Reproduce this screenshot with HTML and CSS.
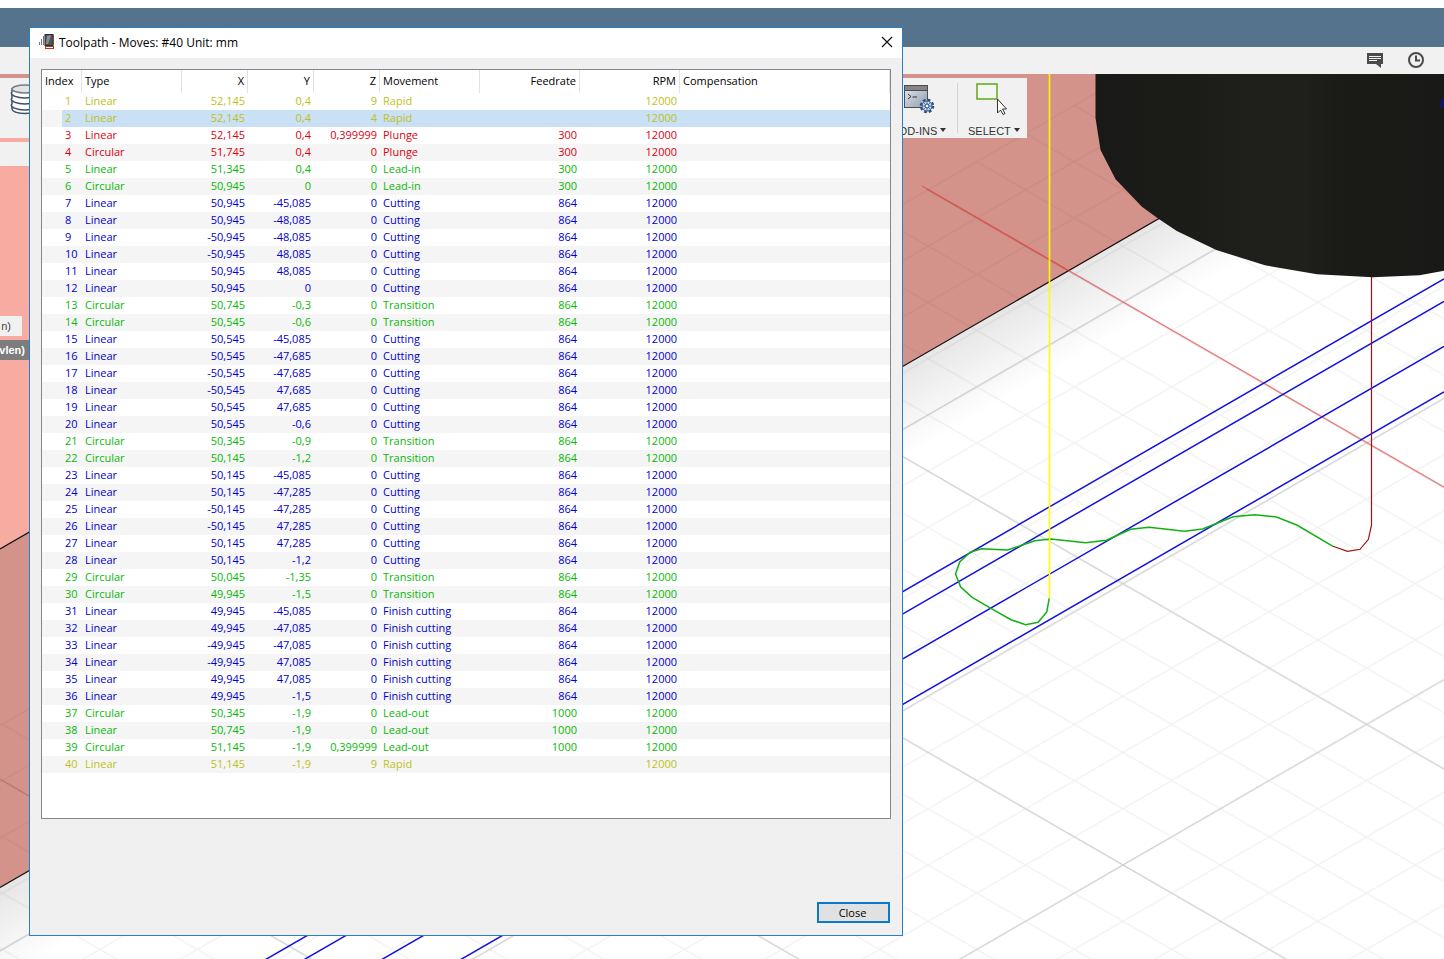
FILE: index.html
```html
<!DOCTYPE html>
<html lang="en">
<head>
<meta charset="utf-8">
<title>Toolpath</title>
<link rel="stylesheet" href="styles.css">
</head>
<body>
<div class="app">
  <svg class="viewport" viewBox="0 0 1444 959" preserveAspectRatio="xMinYMin slice" aria-hidden="true">
    <defs>
      <pattern id="minor" x="1123" y="865" width="97.44" height="56.26" patternUnits="userSpaceOnUse">
        <path d="M0 0L97.44 56.26M0 56.26L97.44 0" stroke="#000" stroke-opacity=".055" stroke-width="1.2"/>
      </pattern>
      <pattern id="major" x="1123" y="865" width="487.2" height="281.3" patternUnits="userSpaceOnUse">
        <path d="M0 0L487.2 281.3M0 281.3L487.2 0" stroke="#000" stroke-opacity=".14" stroke-width="1.2"/>
      </pattern>
      <linearGradient id="shade" gradientUnits="userSpaceOnUse" x1="903" y1="366" x2="943" y2="435">
        <stop offset="0" stop-color="#e6e6e6"/><stop offset="1" stop-color="#fff"/>
      </linearGradient>
      <linearGradient id="tool" x1="0" x2="1" y1="0" y2="0">
        <stop offset="0" stop-color="#191917"/><stop offset=".25" stop-color="#1b1b18"/><stop offset=".45" stop-color="#1f1f1b"/><stop offset=".6" stop-color="#1f1f1b"/><stop offset=".7" stop-color="#1a1a17"/><stop offset="1" stop-color="#191917"/>
      </linearGradient>
    </defs>
    <rect width="1444" height="959" fill="#fff"/>
    <path d="M0 887L1444 55V959H0Z" fill="url(#shade)"/>
    <path d="M0 0H1444V55L0 887Z" fill="#d4938a"/>
    <path d="M0 138H400V320L0 549Z" fill="#f7aba1"/>
    <path d="M0 549L400 318" stroke="#111" stroke-width="1.3"/>
    <path d="M0 887.500L1444 54" stroke="#111" stroke-width="1.2"/>
    <path d="M0 724L1254 0H1444V959H0Z" fill="url(#minor)"/>
    <path d="M0 724L1254 0H1444V959H0Z" fill="url(#major)"/>
    <path d="M922 186L1444 487" stroke="#ff2626" stroke-opacity=".55" stroke-width="1.3"/>
    <g stroke="#1010e0" stroke-width="1.5">
      <path d="M257 964.500L1444 279M296 964.300L1444 301.500M374 964L1444 346.500M453 964L1444 392"/>
    </g>
    <path d="M1049.2 598.3L1046.8 612L1038.1 622.3L1025.6 624.7L1011 619.7L990.9 608.3L972.2 597.3L960.7 587L955.5 574L959.7 562L970.1 552.3L981.5 548.7L1007.6 550L1019.7 546L1034.6 540.7L1050.9 539L1085.6 542.7L1106.5 540.3L1118.6 534.7L1130.7 529.3L1149.1 527.3L1184.5 531.3L1202.6 529L1215.8 523.7L1233.1 516.7L1254.6 514.7L1276.5 517L1297.3 525.3L1333 546.3" fill="none" stroke="#12b012" stroke-width="1.5"/>
    <path d="M1333 546.3L1347.6 551.3L1360.1 549.3L1368.4 539.3L1371.500 525V277" fill="none" stroke="#a01018" stroke-width="1.2"/>
    <path d="M1049.500 74V598" stroke="#ffff00" stroke-width="1.600"/>
    <path d="M1095.500 60V118L1100.500 150L1115.6 179.3L1141.9 206.7L1158.8 219L1176.8 231L1216.3 250L1264.9 265.3L1317 274.3L1372.8 277.3L1419.6 275.3L1444 270.7V60Z" fill="url(#tool)"/>
    <rect x="1441" y="99" width="3" height="9" fill="#10107a"/>
  </svg>

  <header class="titlebar"></header>
  <nav class="tabbar" aria-label="Account">
    <button class="icon-button" aria-label="Comments">
      <svg width="18" height="18" viewBox="0 0 18 18"><path d="M1 2H17V13H15V17L10 13H1Z" fill="#4a4a4a"/><path d="M3 5.500H15M3 7.500H15M3 9.500H11" stroke="#f1f1f1"/></svg>
    </button>
    <button class="icon-button" aria-label="Job status">
      <svg width="18" height="18" viewBox="0 0 18 18" fill="none" stroke="#4a4a4a"><circle cx="9" cy="9" r="7" stroke-width="2"/><path d="M9 4.500V9.500H13" stroke-width="2"/></svg>
    </button>
  </nav>

  <div class="toolbar" role="toolbar">
    <button class="tool first" aria-label="Setup">
      <svg width="30" height="32" viewBox="0 0 30 32" fill="#fdfdfd" stroke="#3c4f66" stroke-width="1.500">
        <path d="M2 23v3c1 6 25 6 26 0v-3z"/><path d="M2 18v3c-3 3 5 6 13 6s15-3 13-6v-3z"/><path d="M2 12v3c-3 3 5 6 13 6s15-3 13-6v-3z"/><path d="M2 6v3c-3 3 5 6 13 6s15-3 13-6V6z"/><ellipse cx="15" cy="6" rx="13" ry="4" fill="#e4e4e4" stroke="#777c84"/>
      </svg>
    </button>
    <button class="tool addins">
      <svg width="34" height="32" viewBox="0 0 34 32">
        <defs><linearGradient id="con" x1="0" y1="0" x2="1" y2="1"><stop offset="0" stop-color="#e8eaee"/><stop offset="1" stop-color="#8e9bb0"/></linearGradient></defs>
        <rect x="2.500" y="2.500" width="23" height="22" fill="url(#con)" stroke="#4a4d52"/><path d="M3 3H25V7H3Z" fill="#858585"/><path d="M2.500 7.500H25.500" stroke="#4a4d52"/>
        <path d="M6 11L9 13.500L6 16M10.500 14H15" fill="none" stroke="#333"/>
        <circle cx="25" cy="23" r="5.500" fill="#c3d6ee" stroke="#274a7c" stroke-width="3.500" stroke-dasharray="2.400 1.920"/><circle cx="25" cy="23" r="5" fill="#c3d6ee" stroke="#3c5f92"/><path d="M25 18V28M20 23H30M21.500 19.500L28.500 26.500M28.500 19.500L21.500 26.500" stroke="#3c5f92" stroke-width=".8"/><circle cx="25" cy="23" r="2" fill="#fff" stroke="#274a7c"/>
      </svg>
      <span>ADD-INS <i class="caret"></i></span>
    </button>
    <button class="tool select">
      <svg width="34" height="32" viewBox="0 0 34 32">
        <rect x="3" y="1" width="20" height="15" fill="#f4f6f1" stroke="#5fa81e" stroke-width="1.500"/>
        <path d="M23.500 16V30L26.500 27L29 31.500L31 30.500L28.500 26H32.500Z" fill="#fdfdfd" stroke="#333"/>
      </svg>
      <span>SELECT <i class="caret"></i></span>
    </button>
  </div>

  <aside class="browser">
    <div class="browser-head"></div>
    <div class="browser-item">n)</div>
    <div class="browser-item active">vlen)</div>
  </aside>

  <section class="dialog" role="dialog" aria-labelledby="dialog-title">
    <div class="dialog-title">
      <svg width="16" height="16" viewBox="0 0 16 16"><path d="M.5 11V8M2.500 11V5M4.500 11V2" stroke="#777"/><rect x="6" y=".5" width="8" height="11" fill="#50545b" stroke="#2c2c2c"/><path d="M8 2L12 1L9 10H7Z" fill="#8b9098"/><path d="M14.500 1V11" stroke="#7a5040"/><rect x="6.500" y="12.500" width="8" height="2" fill="#fff" stroke="#b5391d"/></svg>
      <h1 id="dialog-title">Toolpath - Moves: #40 Unit: mm</h1>
      <button class="x-button" aria-label="Close window"><svg width="12" height="12" viewBox="0 0 12 12"><path d="M1 1L11 11M11 1L1 11" stroke="#111" stroke-width="1.200"/></svg></button>
    </div>
    <div class="dialog-body">
      <div class="list">
        <table>
          <colgroup><col class="c-index"><col class="c-wide"><col class="c-num"><col class="c-num"><col class="c-num"><col class="c-wide"><col class="c-wide"><col class="c-wide"><col></colgroup>
          <thead><tr><th>Index</th><th>Type</th><th>X</th><th>Y</th><th>Z</th><th>Movement</th><th>Feedrate</th><th>RPM</th><th>Compensation</th></tr></thead>
          <tbody>
<tr class="rapid"><td>1</td><td>Linear</td><td>52,145</td><td>0,4</td><td>9</td><td>Rapid</td><td></td><td>12000</td><td></td></tr>
<tr class="rapid selected"><td>2</td><td>Linear</td><td>52,145</td><td>0,4</td><td>4</td><td>Rapid</td><td></td><td>12000</td><td></td></tr>
<tr class="plunge"><td>3</td><td>Linear</td><td>52,145</td><td>0,4</td><td>0,399999</td><td>Plunge</td><td>300</td><td>12000</td><td></td></tr>
<tr class="plunge"><td>4</td><td>Circular</td><td>51,745</td><td>0,4</td><td>0</td><td>Plunge</td><td>300</td><td>12000</td><td></td></tr>
<tr class="lead"><td>5</td><td>Linear</td><td>51,345</td><td>0,4</td><td>0</td><td>Lead-in</td><td>300</td><td>12000</td><td></td></tr>
<tr class="lead"><td>6</td><td>Circular</td><td>50,945</td><td>0</td><td>0</td><td>Lead-in</td><td>300</td><td>12000</td><td></td></tr>
<tr class="cut"><td>7</td><td>Linear</td><td>50,945</td><td>-45,085</td><td>0</td><td>Cutting</td><td>864</td><td>12000</td><td></td></tr>
<tr class="cut"><td>8</td><td>Linear</td><td>50,945</td><td>-48,085</td><td>0</td><td>Cutting</td><td>864</td><td>12000</td><td></td></tr>
<tr class="cut"><td>9</td><td>Linear</td><td>-50,945</td><td>-48,085</td><td>0</td><td>Cutting</td><td>864</td><td>12000</td><td></td></tr>
<tr class="cut"><td>10</td><td>Linear</td><td>-50,945</td><td>48,085</td><td>0</td><td>Cutting</td><td>864</td><td>12000</td><td></td></tr>
<tr class="cut"><td>11</td><td>Linear</td><td>50,945</td><td>48,085</td><td>0</td><td>Cutting</td><td>864</td><td>12000</td><td></td></tr>
<tr class="cut"><td>12</td><td>Linear</td><td>50,945</td><td>0</td><td>0</td><td>Cutting</td><td>864</td><td>12000</td><td></td></tr>
<tr class="lead"><td>13</td><td>Circular</td><td>50,745</td><td>-0,3</td><td>0</td><td>Transition</td><td>864</td><td>12000</td><td></td></tr>
<tr class="lead"><td>14</td><td>Circular</td><td>50,545</td><td>-0,6</td><td>0</td><td>Transition</td><td>864</td><td>12000</td><td></td></tr>
<tr class="cut"><td>15</td><td>Linear</td><td>50,545</td><td>-45,085</td><td>0</td><td>Cutting</td><td>864</td><td>12000</td><td></td></tr>
<tr class="cut"><td>16</td><td>Linear</td><td>50,545</td><td>-47,685</td><td>0</td><td>Cutting</td><td>864</td><td>12000</td><td></td></tr>
<tr class="cut"><td>17</td><td>Linear</td><td>-50,545</td><td>-47,685</td><td>0</td><td>Cutting</td><td>864</td><td>12000</td><td></td></tr>
<tr class="cut"><td>18</td><td>Linear</td><td>-50,545</td><td>47,685</td><td>0</td><td>Cutting</td><td>864</td><td>12000</td><td></td></tr>
<tr class="cut"><td>19</td><td>Linear</td><td>50,545</td><td>47,685</td><td>0</td><td>Cutting</td><td>864</td><td>12000</td><td></td></tr>
<tr class="cut"><td>20</td><td>Linear</td><td>50,545</td><td>-0,6</td><td>0</td><td>Cutting</td><td>864</td><td>12000</td><td></td></tr>
<tr class="lead"><td>21</td><td>Circular</td><td>50,345</td><td>-0,9</td><td>0</td><td>Transition</td><td>864</td><td>12000</td><td></td></tr>
<tr class="lead"><td>22</td><td>Circular</td><td>50,145</td><td>-1,2</td><td>0</td><td>Transition</td><td>864</td><td>12000</td><td></td></tr>
<tr class="cut"><td>23</td><td>Linear</td><td>50,145</td><td>-45,085</td><td>0</td><td>Cutting</td><td>864</td><td>12000</td><td></td></tr>
<tr class="cut"><td>24</td><td>Linear</td><td>50,145</td><td>-47,285</td><td>0</td><td>Cutting</td><td>864</td><td>12000</td><td></td></tr>
<tr class="cut"><td>25</td><td>Linear</td><td>-50,145</td><td>-47,285</td><td>0</td><td>Cutting</td><td>864</td><td>12000</td><td></td></tr>
<tr class="cut"><td>26</td><td>Linear</td><td>-50,145</td><td>47,285</td><td>0</td><td>Cutting</td><td>864</td><td>12000</td><td></td></tr>
<tr class="cut"><td>27</td><td>Linear</td><td>50,145</td><td>47,285</td><td>0</td><td>Cutting</td><td>864</td><td>12000</td><td></td></tr>
<tr class="cut"><td>28</td><td>Linear</td><td>50,145</td><td>-1,2</td><td>0</td><td>Cutting</td><td>864</td><td>12000</td><td></td></tr>
<tr class="lead"><td>29</td><td>Circular</td><td>50,045</td><td>-1,35</td><td>0</td><td>Transition</td><td>864</td><td>12000</td><td></td></tr>
<tr class="lead"><td>30</td><td>Circular</td><td>49,945</td><td>-1,5</td><td>0</td><td>Transition</td><td>864</td><td>12000</td><td></td></tr>
<tr class="cut"><td>31</td><td>Linear</td><td>49,945</td><td>-45,085</td><td>0</td><td>Finish cutting</td><td>864</td><td>12000</td><td></td></tr>
<tr class="cut"><td>32</td><td>Linear</td><td>49,945</td><td>-47,085</td><td>0</td><td>Finish cutting</td><td>864</td><td>12000</td><td></td></tr>
<tr class="cut"><td>33</td><td>Linear</td><td>-49,945</td><td>-47,085</td><td>0</td><td>Finish cutting</td><td>864</td><td>12000</td><td></td></tr>
<tr class="cut"><td>34</td><td>Linear</td><td>-49,945</td><td>47,085</td><td>0</td><td>Finish cutting</td><td>864</td><td>12000</td><td></td></tr>
<tr class="cut"><td>35</td><td>Linear</td><td>49,945</td><td>47,085</td><td>0</td><td>Finish cutting</td><td>864</td><td>12000</td><td></td></tr>
<tr class="cut"><td>36</td><td>Linear</td><td>49,945</td><td>-1,5</td><td>0</td><td>Finish cutting</td><td>864</td><td>12000</td><td></td></tr>
<tr class="lead"><td>37</td><td>Circular</td><td>50,345</td><td>-1,9</td><td>0</td><td>Lead-out</td><td>1000</td><td>12000</td><td></td></tr>
<tr class="lead"><td>38</td><td>Linear</td><td>50,745</td><td>-1,9</td><td>0</td><td>Lead-out</td><td>1000</td><td>12000</td><td></td></tr>
<tr class="lead"><td>39</td><td>Circular</td><td>51,145</td><td>-1,9</td><td>0,399999</td><td>Lead-out</td><td>1000</td><td>12000</td><td></td></tr>
<tr class="rapid"><td>40</td><td>Linear</td><td>51,145</td><td>-1,9</td><td>9</td><td>Rapid</td><td></td><td>12000</td><td></td></tr>
          </tbody>
        </table>
      </div>
      <div class="dialog-actions"><button class="close-button">Close</button></div>
    </div>
  </section>
</div>
</body>
</html>
```

FILE: styles.css
```css
* { box-sizing: border-box; }
body { margin: 0; font-family: "Open Sans", "Noto Sans", sans-serif; font-size: 11px; color: #000; }
button { border: 0; padding: 0; background: none; font: inherit; color: inherit; }
svg { display: block; flex: none; }

.app { position: relative; min-height: 100vh; overflow: hidden; }
.viewport { position: absolute; inset: 0; width: 100%; height: 100%; }
.titlebar { position: relative; height: 47px; background: #56738d; border-top: 8px solid #fff; }
.tabbar { position: relative; display: flex; justify-content: flex-end; align-items: flex-start; gap: 23px; height: 27px; padding: 4px 19px 0 0; background: #f1f1f1; }

.toolbar { position: relative; display: flex; width: 1027px; max-width: 100%; height: 60px; margin-top: 4px; padding-left: 10px; background: #f1f1f1; font-family: "Liberation Sans", Arial, sans-serif; color: #333; }
.tool { display: flex; flex-direction: column; align-items: flex-start; gap: 10px; padding-top: 5px; white-space: nowrap; line-height: 12px; }
.tool.first { margin-right: auto; }
.tool.addins { width: 67px; padding-left: 12px; }
.tool.addins span { margin-left: -10px; }
.tool.select { width: 70px; padding-left: 11px; background: linear-gradient(#d4d4d4, #d4d4d4) 0 5px / 1px 50px no-repeat; }
.tool.select svg { margin-left: 6px; }
.caret { display: inline-block; border: 3px solid transparent; border-top: 4px solid #333; border-bottom: 0; vertical-align: 3px; }

.browser { position: relative; width: 240px; margin-top: 4px; font-family: "Liberation Sans", Arial, sans-serif; }
.browser-head { height: 24px; margin-bottom: 150px; background: #f1f1f1; }
.browser-item { display: flex; align-items: center; justify-content: flex-end; width: 22px; height: 20px; padding-right: 11px; margin-bottom: 4px; background: #f1f1f1; color: #444; white-space: nowrap; }
.browser-item.active { width: 29px; padding-right: 4px; background: #7d7d7d; color: #fff; font-weight: bold; }

.dialog { position: absolute; left: 29px; top: 27px; width: 874px; background: #f0f0f0; border: 1px solid #2a7fc4; }
.dialog-title { display: flex; align-items: center; gap: 4px; height: 30px; padding: 0 9px 2px; background: #fff; }
.dialog-title h1 { flex: 1; margin: 0; padding-top: 2px; font-size: 12px; font-weight: normal; line-height: 16px; }
.dialog-body { padding: 11px; }
.list { padding-bottom: 45px; border: 1px solid #828790; background: #fff; }
table { width: 100%; table-layout: fixed; border-collapse: separate; border-spacing: 0; }
.c-index { width: 40px; }
.c-wide { width: 100px; }
.c-num { width: 66px; }
th { height: 23px; padding: 0 3px 2px; border-right: 1px solid #e2e2e2; font-weight: normal; text-align: left; line-height: 17px; }
td { height: 17px; padding: 0 3px 2px; line-height: 15px; white-space: nowrap; }
td:first-child { padding-left: 23px; padding-right: 0; }
tr > :nth-child(3), tr > :nth-child(4), tr > :nth-child(5), tr > :nth-child(7), tr > :nth-child(8) { text-align: right; }
tbody tr:nth-child(even) { background: #f5f5f5; }
tbody tr.selected td { background: #c9e0f5; }
tbody tr.selected td:first-child { background: linear-gradient(to right, #f5f5f5 20px, #c9e0f5 20px); }
.rapid { color: #c0c018; }
.plunge { color: #e00010; }
.lead { color: #08b808; }
.cut { color: #0000d0; }
.dialog-actions { display: flex; justify-content: flex-end; padding: 83px 1px 1px 0; }
.close-button { width: 73px; height: 21px; padding-right: 2px; border: 2px solid #0b78d0; background: #e1e1e1; line-height: 16px; }
```
